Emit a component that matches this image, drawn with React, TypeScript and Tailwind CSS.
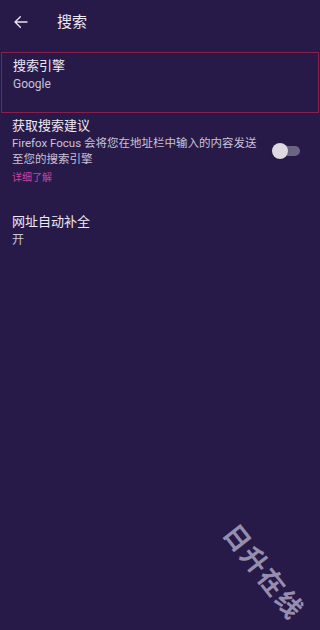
import React from 'react';

const FONT = { fontFamily: '"Roboto", "Noto Sans CJK SC", sans-serif' };

export default function App() {
  return (
    <div className="relative w-[320px] h-[630px] overflow-hidden bg-[#281a48] text-[#ece8f4]" style={FONT}>
      {/* Header */}
      <div className="flex items-center h-[44px] pl-[13px]">
        <svg width="16" height="16" viewBox="0 0 24 24" fill="none" stroke="#e8e4f0" strokeWidth={2} strokeLinecap="round" strokeLinejoin="round">
          <path d="M21 12H3m0 0l8-8m-8 8l8 8" />
        </svg>
        <span className="ml-[28px] text-[15px] leading-none">搜索</span>
      </div>

      {/* Search engine (focused) */}
      <div className="mt-[8px] mx-[1px] h-[61px] border-[1.5px] border-[#8a1f4e] px-[11px] pt-[4px]">
        <div className="text-[13px] leading-[18px]">搜索引擎</div>
        <div className="text-[12px] leading-[18px] text-[#c9c2d8]">Google</div>
      </div>

      {/* Search suggestions */}
      <div className="flex items-center px-[12px] pt-[4px]">
        <div className="flex-1 min-w-0">
          <div className="text-[13px] leading-[18px]">获取搜索建议</div>
          <div className="text-[11.5px] leading-[16px] text-[#c9c2d8] w-[250px]">
            Firefox Focus 会将您在地址栏中输入的内容发送至您的搜索引擎
          </div>
          <div className="mt-[4px] text-[10px] leading-[14px] text-[#d2409e]">详细了解</div>
        </div>
        <div className="relative w-[28px] h-[14px] mr-[8px]">
          <div className="absolute left-[6px] right-0 top-[2px] h-[10px] rounded-full bg-[#6c6484]" />
          <div className="absolute left-0 top-[-1px] w-[16px] h-[16px] rounded-full bg-[#dcd9e0] shadow" />
        </div>
      </div>

      {/* URL autocomplete */}
      <div className="px-[12px] pt-[28px]">
        <div className="text-[13px] leading-[18px]">网址自动补全</div>
        <div className="text-[12px] leading-[18px] text-[#c9c2d8]">开</div>
      </div>

      {/* Watermark */}
      <div className="absolute left-[207px] top-[553px] rotate-[52deg] text-[26px] font-bold tracking-[2px] text-[#aaa3c0] opacity-85 whitespace-nowrap">
        日升在线
      </div>
    </div>
  );
}
